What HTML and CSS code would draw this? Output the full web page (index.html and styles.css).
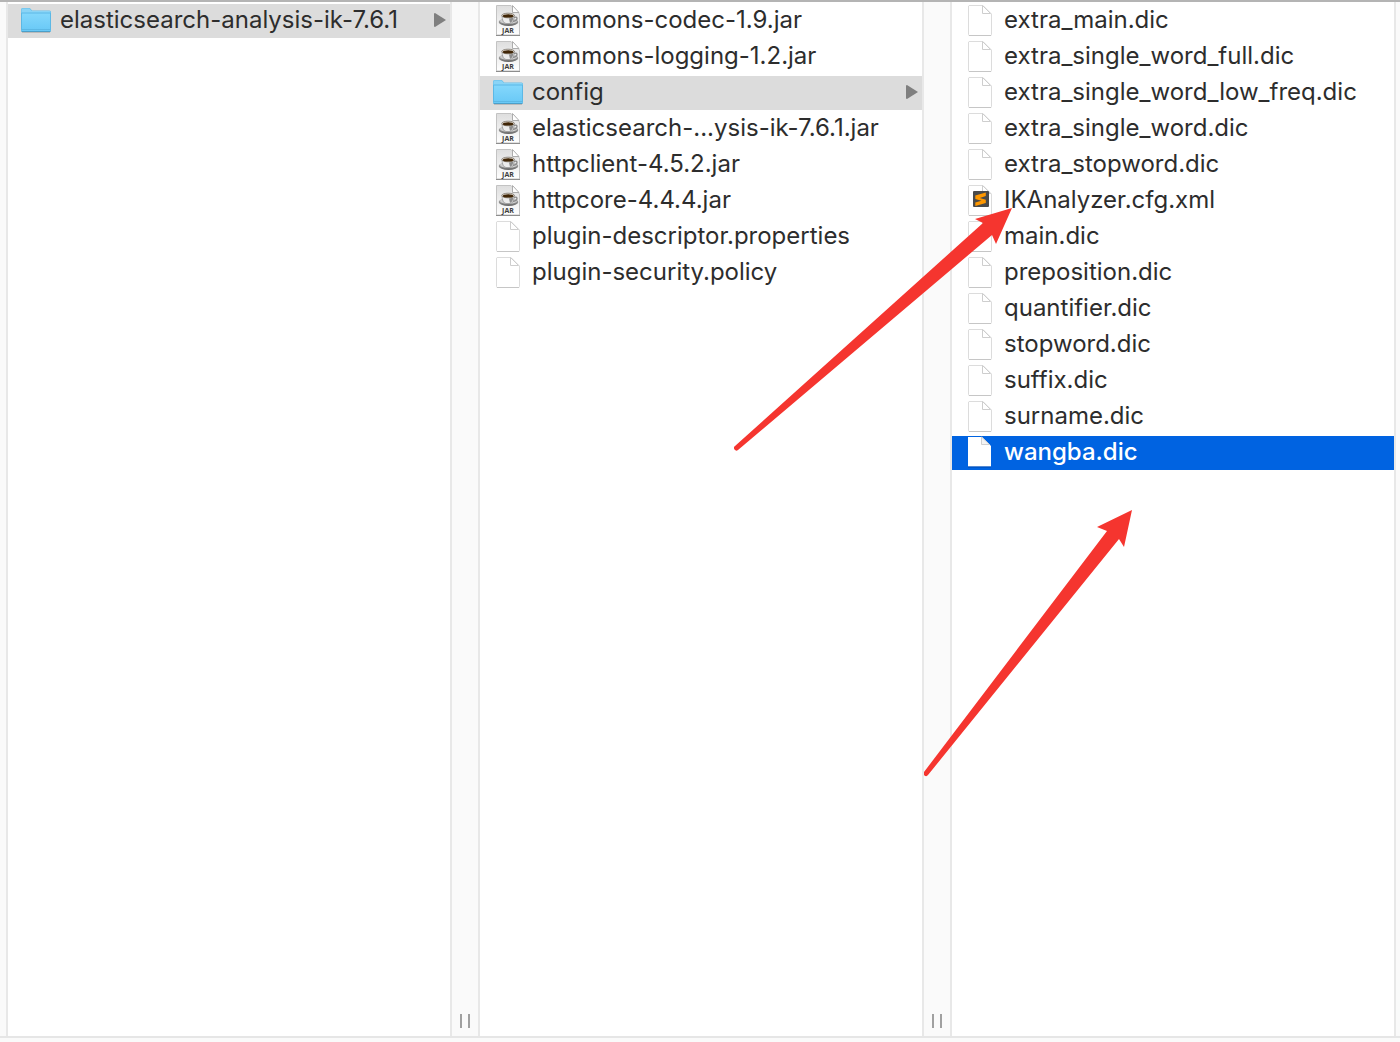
FILE: index.html
```html
<!DOCTYPE html>
<html lang="en">
<head>
    <meta charset="UTF-8">
    <meta name="viewport" content="width=device-width, initial-scale=1.0">
    <title>elasticsearch-analysis-ik-7.6.1</title>
    <link rel="stylesheet" href="styles.css">
</head>
<body>
    <!-- shared icons -->
    <svg class="icon-defs" aria-hidden="true">
        <defs>
            <linearGradient id="folder-fill" x1="0" y1="0" x2="0" y2="1">
                <stop offset="0" stop-color="#85d8fc"/>
                <stop offset="1" stop-color="#68c8f6"/>
            </linearGradient>
            <linearGradient id="jar-fill" x1="0" y1="0" x2="0" y2="1">
                <stop offset="0" stop-color="#dedede"/>
                <stop offset="1" stop-color="#ffffff"/>
            </linearGradient>
            <linearGradient id="saucer-fill" x1="0" y1="0" x2="0" y2="1">
                <stop offset="0" stop-color="#bdbdbd"/>
                <stop offset="1" stop-color="#666666"/>
            </linearGradient>
        </defs>
        <symbol id="icon-folder" viewBox="0 0 32 32">
            <path d="M1 27V5.600Q1 4 2.600 4H9q1 0 1.600.8L12 6.400H29.500Q31 6.400 31 8V27z" fill="#66bde8"/>
            <path d="M1.500 9V5.800Q1.500 4.500 2.800 4.500H8.800q.8 0 1.400.7L11.800 7H29.200Q30.500 7 30.500 8.200V9z" fill="#8ad4f6"/>
            <path d="M1 8.600H31V26.500Q31 27.500 30 27.500H2Q1 27.500 1 26.500z" fill="url(#folder-fill)"/>
            <path d="M1.500 9V26.500M30.500 9V26.500M1 9H31M1.500 25.500H30.500" fill="none" stroke="#5cb8e5"/>
            <path d="M1.500 27.500H30.500" stroke="#4b9fc9"/>
            <path d="M2 28.500H30" stroke="#000" stroke-opacity=".15"/>
        </symbol>
        <symbol id="icon-file" viewBox="0 0 32 32">
            <path d="M5 1.500H19L27.500 10V30.500Q27.500 31.500 26.500 31.500H5.500Q4.500 31.500 4.500 30.500V2z" fill="#fff" stroke="#dcdcdc"/>
            <path d="M5 31.500H27" stroke="#c6c6c6"/>
            <path d="M18 1.500Q20 4 18.500 9.500Q24 8.500 27.500 10.500z" fill="#f3f3f3"/>
            <path d="M18.500 1.500V9.500H26.500z" fill="#fff" stroke="#cecece"/>
        </symbol>
        <symbol id="icon-file-selected" viewBox="0 0 32 32">
            <path d="M4 1H18L27 10V30.500H4z" fill="#fff"/>
            <path d="M17.500 1V8.500H25.500z" fill="#f4f4f4" stroke="#d0d0d0"/>
            <path d="M4 31H27" stroke="#003f9e" stroke-opacity=".7"/>
        </symbol>
        <symbol id="icon-jar" viewBox="0 0 32 32">
            <path d="M4.500 1.500H19L27.500 10V31H4.500z" fill="url(#jar-fill)" stroke="#c3c3c3"/>
            <path d="M4 31.500H28" stroke="#8d8d8d"/>
            <path d="M20.500 1.500V8.500H27z" fill="#fff" stroke="#adadad"/>
            <ellipse cx="16.500" cy="18" rx="9.800" ry="4" fill="url(#saucer-fill)"/>
            <ellipse cx="16.500" cy="17" rx="8.500" ry="3" fill="#cfcfcf"/>
            <path d="M21 14q4-2 4 .5T20 17.500" fill="none" stroke="#8a8a8a" stroke-width="1.300"/>
            <path d="M10 11.500Q10.200 19 14 19.500H18.500Q22 19 22.200 11.500z" fill="#ececec" stroke="#8b8b8b" stroke-width=".7"/>
            <path d="M17 14.500Q21 14 21.500 12.500Q21 18 18 19z" fill="#8c8c8c"/>
            <ellipse cx="16.100" cy="11.500" rx="6.300" ry="2.300" fill="#e9e4dc" stroke="#696055" stroke-width=".7"/>
            <ellipse cx="16.100" cy="11.900" rx="5.300" ry="1.600" fill="#402607"/>
            <text class="jar-label" x="16" y="29" text-anchor="middle">JAR</text>
        </symbol>
        <symbol id="icon-sublime" viewBox="0 0 32 32">
            <use href="#icon-file"/>
            <rect x="9" y="7" width="16" height="16" rx="1" fill="#4a4a4a"/>
            <path d="M21.800 8.500V12L15.800 14L21.800 15.800V19L11.300 22V18.600L17.500 16.700L11.300 14.900V11.600z" fill="#ff9800"/>
        </symbol>
    </svg>

    <main class="browser">
        <div class="edge edge-left"></div>

        <nav class="column" aria-label="Plugins">
            <ul>
                <li><a class="item open" href="#"><svg class="icon"><use href="#icon-folder"/></svg><span class="name">elasticsearch-analysis-ik-7.6.1</span><svg class="arrow" viewBox="0 0 12 14"><path d="M1 0L12 7L1 14Q0 14 0 13V1Q0 0 1 0z"/></svg></a></li>
            </ul>
        </nav>

        <div class="resizer"><span></span><span></span></div>

        <nav class="column" aria-label="elasticsearch-analysis-ik-7.6.1">
            <ul>
                <li><a class="item" href="#"><svg class="icon"><use href="#icon-jar"/></svg><span class="name">commons-codec-1.9.jar</span></a></li>
                <li><a class="item" href="#"><svg class="icon"><use href="#icon-jar"/></svg><span class="name">commons-logging-1.2.jar</span></a></li>
                <li><a class="item open" href="#"><svg class="icon"><use href="#icon-folder"/></svg><span class="name">config</span><svg class="arrow" viewBox="0 0 12 14"><path d="M1 0L12 7L1 14Q0 14 0 13V1Q0 0 1 0z"/></svg></a></li>
                <li><a class="item" href="#"><svg class="icon"><use href="#icon-jar"/></svg><span class="name">elasticsearch-...ysis-ik-7.6.1.jar</span></a></li>
                <li><a class="item" href="#"><svg class="icon"><use href="#icon-jar"/></svg><span class="name">httpclient-4.5.2.jar</span></a></li>
                <li><a class="item" href="#"><svg class="icon"><use href="#icon-jar"/></svg><span class="name">httpcore-4.4.4.jar</span></a></li>
                <li><a class="item" href="#"><svg class="icon"><use href="#icon-file"/></svg><span class="name">plugin-descriptor.properties</span></a></li>
                <li><a class="item" href="#"><svg class="icon"><use href="#icon-file"/></svg><span class="name">plugin-security.policy</span></a></li>
            </ul>
        </nav>

        <div class="resizer"><span></span><span></span></div>

        <nav class="column" aria-label="config">
            <ul>
                <li><a class="item" href="#"><svg class="icon"><use href="#icon-file"/></svg><span class="name">extra_main.dic</span></a></li>
                <li><a class="item" href="#"><svg class="icon"><use href="#icon-file"/></svg><span class="name">extra_single_word_full.dic</span></a></li>
                <li><a class="item" href="#"><svg class="icon"><use href="#icon-file"/></svg><span class="name">extra_single_word_low_freq.dic</span></a></li>
                <li><a class="item" href="#"><svg class="icon"><use href="#icon-file"/></svg><span class="name">extra_single_word.dic</span></a></li>
                <li><a class="item" href="#"><svg class="icon"><use href="#icon-file"/></svg><span class="name">extra_stopword.dic</span></a></li>
                <li><a class="item" href="#"><svg class="icon"><use href="#icon-sublime"/></svg><span class="name">IKAnalyzer.cfg.xml</span></a></li>
                <li><a class="item" href="#"><svg class="icon"><use href="#icon-file"/></svg><span class="name">main.dic</span></a></li>
                <li><a class="item" href="#"><svg class="icon"><use href="#icon-file"/></svg><span class="name">preposition.dic</span></a></li>
                <li><a class="item" href="#"><svg class="icon"><use href="#icon-file"/></svg><span class="name">quantifier.dic</span></a></li>
                <li><a class="item" href="#"><svg class="icon"><use href="#icon-file"/></svg><span class="name">stopword.dic</span></a></li>
                <li><a class="item" href="#"><svg class="icon"><use href="#icon-file"/></svg><span class="name">suffix.dic</span></a></li>
                <li><a class="item" href="#"><svg class="icon"><use href="#icon-file"/></svg><span class="name">surname.dic</span></a></li>
                <li><a class="item selected" href="#"><svg class="icon"><use href="#icon-file-selected"/></svg><span class="name">wangba.dic</span></a></li>
            </ul>
        </nav>

        <div class="edge edge-right"></div>
    </main>

    <!-- red pointers drawn over the columns -->
    <svg class="pointer pointer-config" viewBox="0 0 280 246" aria-hidden="true">
        <path d="M1 240L249 17L241 13L278 2L262 38L258 29L4 244A2 2 0 0 1 1 240z"/>
    </svg>
    <svg class="pointer pointer-dic" viewBox="0 0 210 268" aria-hidden="true">
        <path d="M0 263L183 22L173 18L208 1L200 38L195 30L4 266A2 2 0 0 1 0 263z"/>
    </svg>
</body>
</html>
```

FILE: styles.css
```css
* {
    box-sizing: border-box;
}
body {
    font-family: Inter, "Liberation Sans", sans-serif;
    font-size: 24px;
    margin: 0;
    min-height: 100vh;
    display: flex;
    flex-direction: column;
    position: relative;
    overflow-x: hidden;
    color: #2d2d2d;
    background-color: #fafafa;
    border-top: 2px solid #b4b4b4;
}
.icon-defs {
    position: absolute;
    width: 0;
    height: 0;
    overflow: visible;
}
.jar-label {
    font-family: "Open Sans", sans-serif;
    font-size: 7px;
    font-weight: 700;
    fill: #3c3c3c;
}
.browser {
    flex: 1;
    display: flex;
    margin-bottom: 4px;
    border-bottom: 2px solid #e6e6e6;
}
.edge-left {
    width: 8px;
    border-right: 2px solid #e8e8e8;
}
.edge-right {
    width: 6px;
    border-left: 2px solid #e8e8e8;
}
.column {
    flex: 1;
    min-width: 0;
    padding-top: 2px;
    background-color: #fff;
}
.column ul {
    list-style: none;
    margin: 0;
    padding: 0;
    display: flex;
    flex-direction: column;
    gap: 2px;
}
.item {
    display: flex;
    align-items: center;
    gap: 8px;
    height: 34px;
    padding: 0 4px 2px 12px;
    color: inherit;
    text-decoration: none;
}
.item.open {
    background-color: #dcdcdc;
}
.item.selected {
    color: #fff;
    font-weight: 500;
    background-color: #0063e1;
}
.icon {
    width: 32px;
    height: 32px;
    flex-shrink: 0;
}
.name {
    flex: 1;
    line-height: 32px;
    white-space: nowrap;
}
.arrow {
    width: 12px;
    height: 14px;
    fill: #7f7f7f;
}
.resizer {
    width: 30px;
    display: flex;
    align-items: flex-end;
    gap: 6px;
    padding: 0 8px 8px;
    border-left: 2px solid #e8e8e8;
    border-right: 2px solid #e8e8e8;
    cursor: col-resize;
}
.resizer span {
    width: 2px;
    height: 14px;
    background-color: #a0a0a0;
}
.pointer {
    position: absolute;
    fill: #f5352f;
    pointer-events: none;
}
.pointer-config {
    left: 734px;
    top: 204px;
    width: 280px;
    height: 246px;
}
.pointer-dic {
    left: 924px;
    top: 507px;
    width: 210px;
    height: 268px;
}
```
